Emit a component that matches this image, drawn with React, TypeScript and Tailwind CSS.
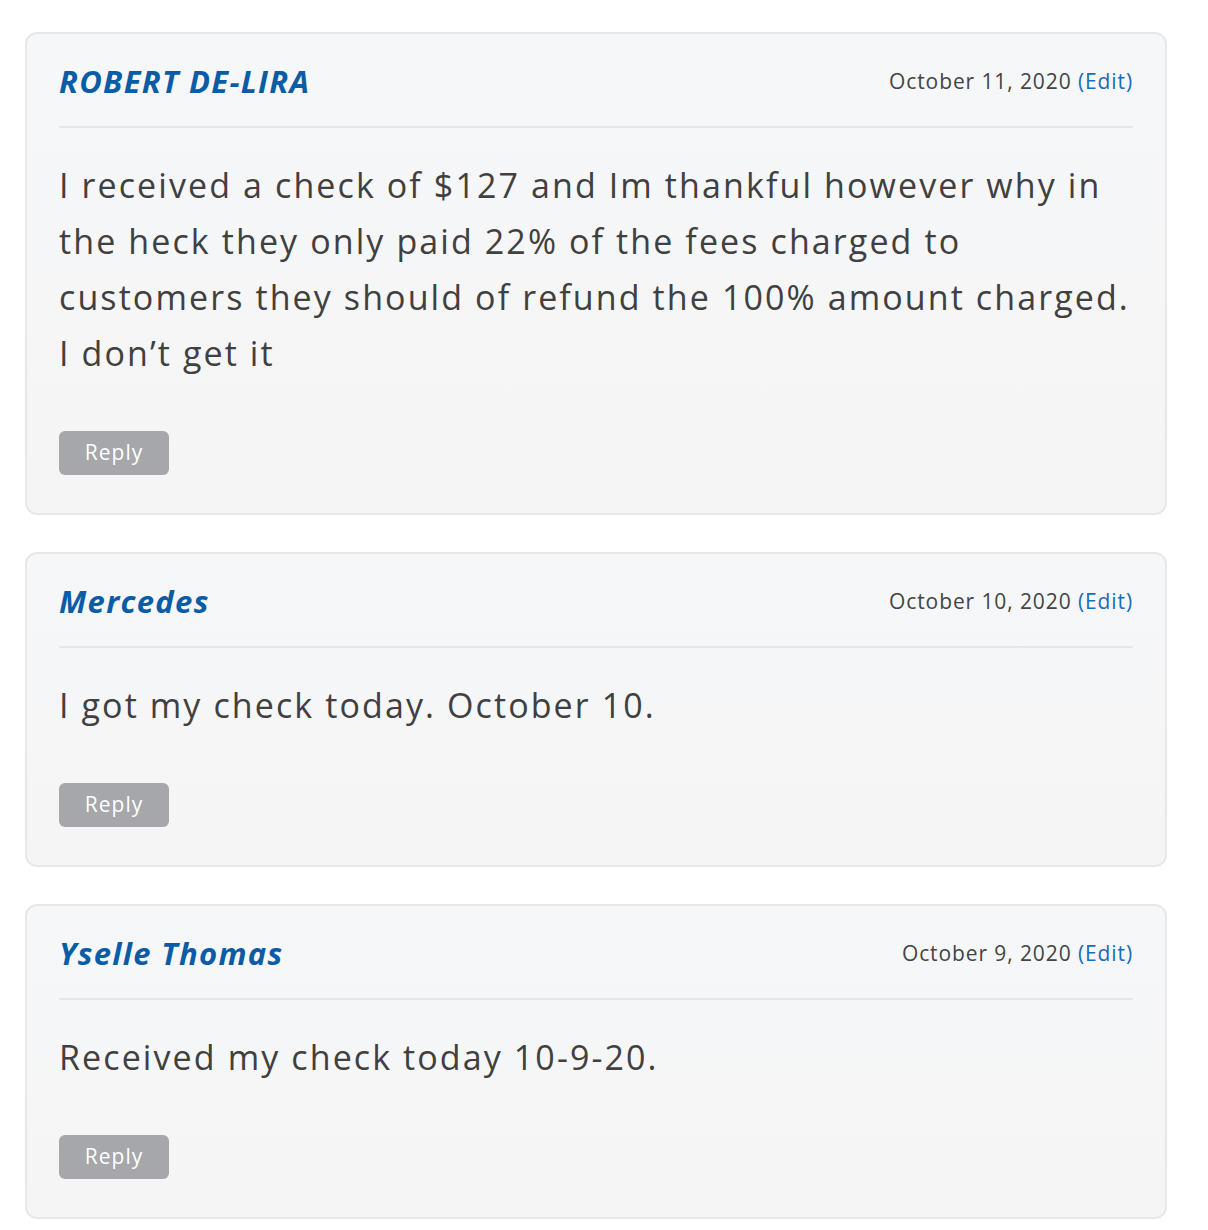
import React from "react";

type Comment = {
  id: number;
  author: string;
  date: string;
  lines: string[];
};

const comments: Comment[] = [
  {
    id: 1,
    author: "ROBERT DE-LIRA",
    date: "October 11, 2020",
    lines: [
      "I received a check of $127 and Im thankful however why in",
      "the heck they only paid 22% of the fees charged to",
      "customers they should of refund the 100% amount charged.",
      "I don’t get it",
    ],
  },
  {
    id: 2,
    author: "Mercedes",
    date: "October 10, 2020",
    lines: ["I got my check today. October 10."],
  },
  {
    id: 3,
    author: "Yselle Thomas",
    date: "October 9, 2020",
    lines: ["Received my check today 10-9-20."],
  },
];

const CommentCard = (props: Comment) => {
  return (
    <div className="rounded-[12px] border-2 border-[#e8e8e8] bg-gradient-to-b from-[#f6f7f9] to-[#f5f5f5] px-[32px] pt-[30px] pb-[38px]">
      {/* Header */}
      <div className="flex items-center justify-between border-b-2 border-[#e7e7e7] pb-[28px]">
        <h5 className="text-[31px] leading-[34px] font-bold italic tracking-[1.3px] text-[#0b5ca6]">
          {props.author}
        </h5>
        <div className="text-[21px] leading-[34px] tracking-[0.9px] text-[#444444]">
          {props.date} <a className="text-[#1b6dbb]">(Edit)</a>
        </div>
      </div>

      {/* Body */}
      <p className="mt-[29px] text-[34px] leading-[56px] tracking-[2.1px] text-[#404040]">
        {props.lines.map((line, i) => (
          <span key={i} className="block whitespace-nowrap">
            {line}
          </span>
        ))}
      </p>

      <button className="mt-[50px] h-[44px] w-[110px] rounded-[6px] bg-[#a6a7ab] text-[21px] tracking-[1px] text-white">
        Reply
      </button>
    </div>
  );
};

export default function App() {
  return (
    <div className="min-h-[1230px] bg-white pt-[32px] pl-[25px] font-['Open_Sans',sans-serif]">
      <div className="flex w-[1142px] flex-col gap-[37px]">
        {comments.map((c) => (
          <CommentCard key={c.id} {...c} />
        ))}
      </div>
    </div>
  );
}
